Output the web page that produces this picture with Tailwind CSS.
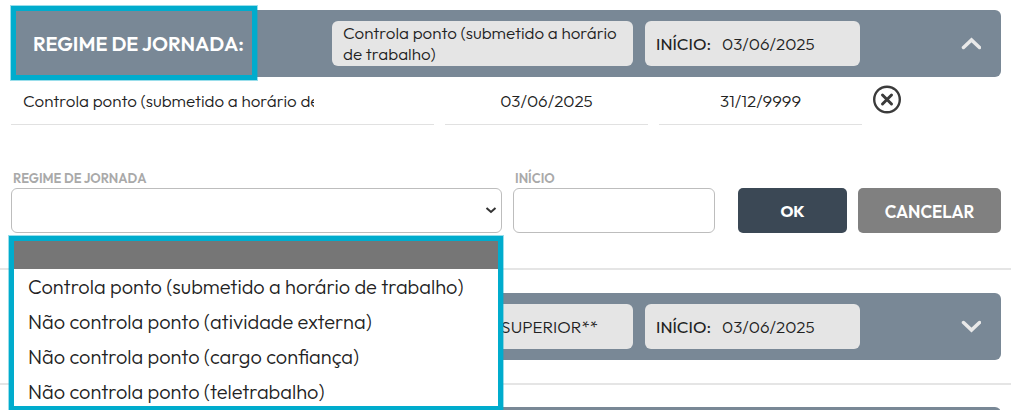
<!DOCTYPE html>
<html lang="pt-BR">
<head>
    <meta charset="UTF-8">
    <meta name="viewport" content="width=device-width, initial-scale=1.0">
    <title>Regime de Jornada</title>
    <script src="https://cdn.jsdelivr.net/npm/@tailwindcss/browser@4"></script>
    <style>
        body {
            font-family: Outfit, Lato, sans-serif;
        }
    </style>
</head>
<body class="bg-white font-light text-[#222] overflow-hidden">
    <main class="pt-[10px]">

        <!-- Regime de jornada (open) -->
        <section>
            <header class="relative mr-[10px] ml-[11px] grid grid-cols-[321fr_313fr_215fr_141fr] items-center rounded-md bg-[#798896] py-[11px]">
                <h2 class="pl-[22px] text-[20px] leading-6 font-semibold text-white whitespace-nowrap">REGIME DE JORNADA:</h2>
                <div class="mr-3 flex h-[45px] items-center rounded-md bg-[#e5e5e5] px-[11px] pb-0.5 text-[17px] leading-[21px]">Controla ponto (submetido a horário de trabalho)</div>
                <div class="flex h-[45px] items-center gap-[11px] rounded-md bg-[#e5e5e5] px-[11px] text-[17px] leading-[21px]">
                    <span class="font-normal">INÍCIO:</span>
                    <span>03/06/2025</span>
                </div>
                <button type="button" aria-label="Recolher" class="mr-5 justify-self-end">
                    <svg class="h-5 w-5" viewBox="0 0 20 20" fill="none" stroke="#e9e9e9" stroke-width="3.500" stroke-linecap="round"><path d="M2.500 13.500 10.500 6l8 7.500"/></svg>
                </button>
                <!-- highlight around the title -->
                <div class="pointer-events-none absolute -top-1 -bottom-[3px] left-0 w-[246px] border-[5px] border-[#00accd] ring-1 ring-[#00accd]/40"></div>
            </header>

            <div class="mr-[10px] ml-[11px] grid h-12 grid-cols-[423fr_203fr_203fr_128fr] gap-[11px] text-[17px]">
                <div class="border-b border-[#e1e1e1]">
                    <input type="text" readonly aria-label="Regime" value="Controla ponto (submetido a horário de trabalho)" class="ml-3 h-full w-[291px]">
                </div>
                <input type="text" readonly aria-label="Início do regime" value="03/06/2025" class="w-full min-w-0 border-b border-[#e1e1e1] text-center">
                <input type="text" readonly aria-label="Fim do regime" value="31/12/9999" class="w-full min-w-0 border-b border-[#e1e1e1] text-center">
                <button type="button" aria-label="Excluir" class="mt-2 h-[29px] w-[29px]">
                    <svg class="h-[29px] w-[29px]" viewBox="0 0 29 29" fill="none" stroke="#3b3b3b"><circle cx="14" cy="14.500" r="12.800" stroke-width="2.400"/><path d="m9.500 10 9 9m0-9-9 9" stroke-width="3" stroke-linecap="round"/></svg>
                </button>
            </div>

            <form class="mr-[10px] ml-[11px] mt-11 grid grid-cols-[491fr_202fr_121fr_143fr] items-end gap-x-[11px]">
                <div class="relative">
                    <label for="regime" class="mb-px block pl-0.5 text-[13px] leading-[18px] font-semibold text-[#a9a9a9]">REGIME DE JORNADA</label>
                    <div class="relative">
                        <select id="regime" class="block h-[45px] w-full appearance-none rounded-md border border-[#bdbdbd] bg-white px-3 text-[17px]">
                            <option></option>
                            <option>Controla ponto (submetido a horário de trabalho)</option>
                            <option>Não controla ponto (atividade externa)</option>
                            <option>Não controla ponto (cargo confiança)</option>
                            <option>Não controla ponto (teletrabalho)</option>
                        </select>
                        <svg class="pointer-events-none absolute top-4 right-[5px] h-3 w-3" viewBox="0 0 12 12" fill="none" stroke="#333" stroke-width="2"><path d="m1.500 4 4.500 4 4.500-4"/></svg>
                    </div>
                    <!-- open list -->
                    <ul class="absolute top-full -left-[2px] -right-px z-10 mt-[3px] border-[5px] border-[#00accd] bg-white text-[20px] leading-[35px] ring-1 ring-[#00accd]/40">
                        <li class="h-7 bg-[#767676]"></li>
                        <li class="px-[14px]">Controla ponto (submetido a horário de trabalho)</li>
                        <li class="px-[14px]">Não controla ponto (atividade externa)</li>
                        <li class="px-[14px]">Não controla ponto (cargo confiança)</li>
                        <li class="h-8 px-[14px]">Não controla ponto (teletrabalho)</li>
                    </ul>
                </div>
                <div>
                    <label for="inicio" class="mb-px block pl-0.5 text-[13px] leading-[18px] font-semibold text-[#a9a9a9]">INÍCIO</label>
                    <input type="text" id="inicio" class="block h-[45px] w-full rounded-md border border-[#bdbdbd] bg-white px-3 text-[17px]">
                </div>
                <button type="submit" class="ml-3 h-[45px] rounded-[5px] bg-[#3b4855] text-base font-bold text-white">OK</button>
                <button type="button" class="h-[45px] rounded-[5px] bg-[#808080] pt-0.5 text-[17px] font-semibold text-white">CANCELAR</button>
            </form>
        </section>

        <hr class="mt-[35px] border-t-2 border-[#e5e5e5]">

        <section class="mt-[23px]">
            <header class="mr-[10px] ml-[11px] grid grid-cols-[321fr_313fr_215fr_141fr] items-center rounded-md bg-[#798896] py-[11px]">
                <h2></h2>
                <div class="mr-3 flex h-[45px] items-center justify-end rounded-md bg-[#e5e5e5] pr-[35px] text-[17px] leading-[21px]">SUPERIOR**</div>
                <div class="flex h-[45px] items-center gap-[11px] rounded-md bg-[#e5e5e5] px-[11px] text-[17px] leading-[21px]">
                    <span class="font-normal">INÍCIO:</span>
                    <span>03/06/2025</span>
                </div>
                <button type="button" aria-label="Expandir" class="mr-5 justify-self-end">
                    <svg class="h-5 w-5" viewBox="0 0 20 20" fill="none" stroke="#e9e9e9" stroke-width="3.500" stroke-linecap="round"><path d="M2.500 5.500 10.500 13l8-7.500"/></svg>
                </button>
            </header>
        </section>

        <hr class="mt-[23px] border-t-2 border-[#e5e5e5]">

        <section class="mt-[22px] h-[3px] overflow-hidden">
            <header class="mr-[10px] ml-[11px] h-16 rounded-md bg-[#798896]"></header>
        </section>
    </main>
</body>
</html>
